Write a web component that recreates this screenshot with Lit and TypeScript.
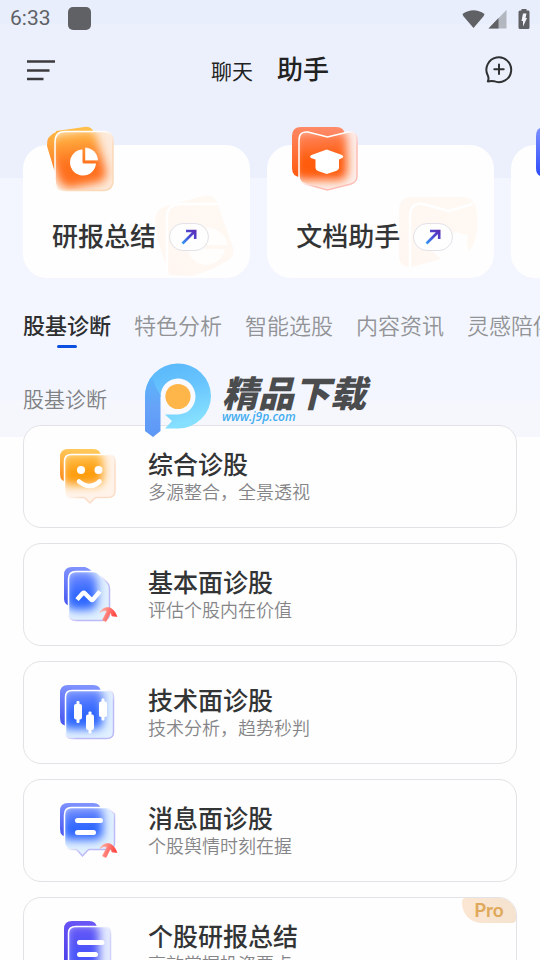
import { LitElement, html, svg, css } from "lit";
import { customElement, property, state } from "lit/decorators.js";
import { classMap } from "lit/directives/class-map.js";

type Art =
  | "pie" | "cap" | "blue"
  | "smile" | "trend" | "candles" | "message" | "report";

interface Tool { title: string; art: Art; }
interface Diagnosis { title: string; note: string; art: Art; pro?: boolean; }

const TOOLS: Tool[] = [
  { title: "研报总结", art: "pie" },
  { title: "文档助手", art: "cap" },
  { title: "智能写作", art: "blue" },
];

const TABS = ["股基诊断", "特色分析", "智能选股", "内容资讯", "灵感陪伴"];

const ITEMS: Diagnosis[] = [
  { title: "综合诊股", note: "多源整合，全景透视", art: "smile" },
  { title: "基本面诊股", note: "评估个股内在价值", art: "trend" },
  { title: "技术面诊股", note: "技术分析，趋势秒判", art: "candles" },
  { title: "消息面诊股", note: "个股舆情时刻在握", art: "message" },
  { title: "个股研报总结", note: "高效掌握投资要点", art: "report", pro: true },
];

/** Colours of a frosted icon: back plate, glow, glass and rim. */
interface Tint { a: string; b: string; glow: string; glass: string; rim: string; }

const AMBER: Tint = { a: "#ffc04a", b: "#ff6a1c", glow: "#ff6f1c", glass: "#fdeadb", rim: "#fbd9b8" };
const CORAL: Tint = { a: "#ff8a68", b: "#ff5a10", glow: "#ff5c08", glass: "#fdeeea", rim: "#ffbdb5" };
const HONEY: Tint = { a: "#ffc95a", b: "#ff8a1c", glow: "#ff9c0c", glass: "#fff3e9", rim: "#fbdcc6" };
const AZURE: Tint = { a: "#8093ff", b: "#4656f0", glow: "#2d66ff", glass: "#e2f1ff", rim: "#bcb9f7" };
const INDIGO: Tint = { a: "#6a55f5", b: "#4a3ee8", glow: "#4a55fa", glass: "#e4ebff", rim: "#d0d2fa" };

@customElement("glass-icon")
class GlassIcon extends LitElement {
  static styles = css`
    :host { display: block; }
    svg { display: block; width: 100%; height: 100%; overflow: visible; }
  `;

  @property() art: Art = "pie";

  private frosted(t: Tint, back: unknown, front: string, mark: unknown) {
    return svg`
      <defs>
        <linearGradient id="plate" x1="0.4" y1="0" x2="0.3" y2="1">
          <stop offset="0" stop-color=${t.a}></stop>
          <stop offset="1" stop-color=${t.b}></stop>
        </linearGradient>
        <linearGradient id="shine" x1="0.3" y1="0" x2="0.4" y2="1">
          <stop offset="0" stop-color=${t.a}></stop>
          <stop offset="0.6" stop-color=${t.glow}></stop>
        </linearGradient>
        <linearGradient id="rim" x1="0" y1="0" x2="1" y2="1">
          <stop offset="0" stop-color="#fff"></stop>
          <stop offset="0.42" stop-color="#fff"></stop>
          <stop offset="0.62" stop-color=${t.rim}></stop>
        </linearGradient>
        <filter id="soft" x="-40%" y="-40%" width="180%" height="180%">
          <feGaussianBlur stdDeviation="5"></feGaussianBlur>
        </filter>
        <clipPath id="pane"><path d=${front}></path></clipPath>
      </defs>
      <g fill="url(#plate)">${back}</g>
      <path d=${front} fill=${t.glass}></path>
      <g clip-path="url(#pane)">
        <g fill="url(#shine)" filter="url(#soft)" transform="translate(2 3)">${back}</g>
      </g>
      <path d=${front} fill="none" stroke="url(#rim)" stroke-width="1.5"></path>
      ${mark}`;
  }

  private redArrow() {
    return svg`
      <defs><linearGradient id="red" x1="0" y1="0" x2="1" y2="0.3">
        <stop offset="0" stop-color="#ffb9ad"></stop>
        <stop offset="1" stop-color="#ff4340"></stop>
      </linearGradient></defs>
      <path d="M41 47.500C43 43 49 41 53 44Q56 46 58 51.500L53 51L51.500 47.500L47 56.500L43.500 55L48 46C45 45 43 46 41 47.500Z"
        fill="url(#red)" stroke="url(#red)" stroke-width="0.600"></path>`;
  }

  private drawing() {
    switch (this.art) {
      case "pie":
        return this.frosted(AMBER,
          svg`<path d="M10 5 Q25 3 38 1 Q45 0 48 6 L58 42 Q59 50 52 53 L22 59 Q13 58 10 50 L1 20 Q0 10 10 6Z"></path>`,
          "M19 5.500H57Q67 5.500 67 16V54Q67 64.500 57 64.500H19Q9 64.500 9 54V16Q9 5.500 19 5.500Z",
          svg`<path d="M36.500 23.500A13 13 0 1 0 50 37.500H38Q36.500 37.500 36.500 36Z" fill="#fff"></path>
            <path d="M39 21.500A13 13 0 0 1 52 34.500H39Z" fill="#ffe6d2"></path>
            <path d="M40 22.500A12 12 0 0 1 51.500 34H40Z" fill="#fff"></path>`);
      case "cap":
        return this.frosted(CORAL,
          svg`<path d="M11 1H46Q55 1 55 10V42Q55 51 46 51H11Q2 51 2 42V10Q2 1 11 1Z"></path>`,
          "M9 14Q9 5 18 6L37.500 11L58 6Q67 5 67 14V50Q67 56 61 58L37.500 64L15 58Q9 56 9 50Z",
          svg`<path d="M36.700 23.500L52 29Q54.500 31 52 32L49 33.500V42Q49 44 46 45L36.700 48L28 45Q25.500 44 25.500 42V33.500L21 32Q19 30.500 21.500 29Z" fill="#fff"></path>`);
      case "blue":
        return this.frosted({ ...AZURE, b: "#2f4dfb" },
          svg`<path d="M11 1H46Q55 1 55 10V42Q55 51 46 51H11Q2 51 2 42V10Q2 1 11 1Z"></path>`,
          "M19 5.500H57Q67 5.500 67 16V54Q67 64.500 57 64.500H19Q9 64.500 9 54V16Q9 5.500 19 5.500Z", "");
      case "smile":
        return this.frosted(HONEY,
          svg`<path d="M9 2H34Q42 2 42 10V27Q42 35 34 35H9Q1 35 1 27V10Q1 2 9 2Z"></path>`,
          "M12.500 7.500H49Q56 7.500 56 14V44Q56 50.500 49 50.500H38Q36 50.500 35 52L31 56L27 52Q26 50.500 24 50.500H12.500Q5.500 50.500 5.500 44V14Q5.500 7.500 12.500 7.500Z",
          svg`<circle cx="22" cy="23" r="4" fill="#fff"></circle><circle cx="39.500" cy="23" r="4" fill="#fff"></circle>
            <path d="M20 34.500Q31 43.500 40.500 34.500" fill="none" stroke="#fff" stroke-width="4.500" stroke-linecap="round"></path>`);
      case "trend":
        return this.frosted(AZURE,
          svg`<path d="M13 2H26Q32 4 36 10V34Q35 42 28 42H13Q5 40 5 34V10Q5 2 13 2Z"></path>`,
          "M17 6.500H34Q38 6.500 40 9L48.500 18Q50.500 20 50.500 24V48Q50.500 55.500 43 55.500H17Q9.500 55.500 9.500 48V14Q9.500 6.500 17 6.500Z",
          svg`<path d="M19.500 33L23.500 28.500Q24.500 27 26 28.500L32 34.500Q33 35.500 34 34.500L39.500 28" fill="none" stroke="#fff" stroke-width="4.400" stroke-linecap="square"></path>${this.redArrow()}`);
      case "candles":
        return this.frosted(AZURE,
          svg`<path d="M9 2H34Q42 2 42 10V35Q42 43 34 43H9Q1 43 1 35V10Q1 2 9 2Z"></path>`,
          "M13 7.500H48Q54.500 7.500 54.500 14V49Q54.500 55.500 48 55.500H13Q6.500 55.500 6.500 49V14Q6.500 7.500 13 7.500Z",
          svg`<g fill="#fff">
            <rect x="15" y="21" width="8" height="15.500" rx="2"></rect><rect x="17.500" y="18" width="3" height="22" rx="1"></rect>
            <rect x="27" y="31.500" width="8" height="15.500" rx="2"></rect><rect x="29.500" y="28.500" width="3" height="22" rx="1"></rect>
            <rect x="40" y="18.500" width="8" height="15.500" rx="2"></rect><rect x="42.500" y="15.500" width="3" height="22" rx="1"></rect></g>`);
      case "message":
        return this.frosted(AZURE,
          svg`<path d="M9 2H34Q42 2 42 10V28Q42 36 34 36H9Q1 36 1 28V10Q1 2 9 2Z"></path>`,
          "M12.500 6.500H48L55.500 13V42Q55.500 48.500 49 48.500H30L28 50L23.500 55L19 50L17 48.500H12.500Q5.500 47 5.500 42V14Q5.500 6.500 12.500 6.500Z",
          svg`<path d="M18.500 19.500H41.500M18.500 31.500H34.500" stroke="#fff" stroke-width="5" stroke-linecap="round"></path>${this.redArrow()}`);
      case "report":
        return this.frosted(INDIGO,
          svg`<path d="M13 2H30Q38 2 38 10V40Q38 48 30 48H13Q5 48 5 40V10Q5 2 13 2Z"></path>`,
          "M17 7.500H45Q51.500 7.500 51.500 14V50Q51.500 57 45 57H17Q9.500 57 9.500 50V14Q9.500 7.500 17 7.500Z",
          svg`<path d="M20.500 23.500H43M20.500 35.500H36.500M20.500 47H36" stroke="#fff" stroke-width="5" stroke-linecap="round"></path>`);
    }
  }

  render() {
    const large = ["pie", "cap", "blue"].includes(this.art);
    return html`<svg viewBox=${large ? "0 0 68 66" : "0 0 60 58"} aria-hidden="true">${this.drawing()}</svg>`;
  }
}

@customElement("tool-card")
class ToolCard extends LitElement {
  static styles = css`
    :host { display: block; flex: 0 0 46%; }
    button {
      position: relative; display: flex; align-items: center; gap: 13px;
      width: 100%; padding: 74px 0 23px 29px;
      border: 0; border-radius: 24px; background: #fefefe;
      font: inherit; text-align: left; cursor: pointer;
    }
    .icon { position: absolute; left: 23px; top: -19px; width: 68px; height: 66px; }
    .ghost { position: absolute; right: 15px; top: 50px; width: 80px; height: 83px; }
    .title {
      position: relative; padding-bottom: 4px; font-size: 26px; line-height: 32px; font-weight: 500;
      color: #333435; white-space: nowrap;
    }
    .go {
      position: relative; box-sizing: border-box; width: 40px; height: 28px;
      display: grid; place-items: center; flex: none;
      border: 1px solid #e2e2e8; border-radius: 14px; background: #fefefe;
    }
    .go svg { display: block; width: 18px; height: 18px; }
  `;

  @property() label = "";
  @property() art: Art = "pie";

  private ghost() {
    if (this.art === "pie") {
      return svg`
        <path d="M12 11Q30 6 48 1Q58 -1 62 7L78 52Q80 62 72 66Q56 76 36 81L14 80Q10 66 3 46L0 26Q0 14 12 11Z" fill="url(#wash)"></path>
        <path d="M12 80V22Q12 9 26 9H66" fill="none" stroke="#fff" stroke-width="2.500"></path>
        <path d="M52 33V50H73Q70 35 52 32ZM49 36Q34 42 33 55Q36 69 51 70Q66 69 70 54H49Z" fill="#fff" opacity="0.8"></path>`;
    }
    return svg`
      <path d="M12 2H64Q77 2 78 20Q80 44 70 56L68 48L69 40L56 37L49 42L33 56L42 64L12 72Q0 72 0 60V16Q0 2 12 2Z" fill="url(#wash)"></path>
      <path d="M11 72V20Q12 7 24 9L50 16L74 9" fill="none" stroke="#fff" stroke-width="2.500"></path>`;
  }

  render() {
    return html`<button type="button">
      <glass-icon class="icon" art=${this.art}></glass-icon>
      <svg class="ghost" viewBox="0 0 80 83" aria-hidden="true">
        <defs><linearGradient id="wash" x1="1" y1="0" x2="0" y2="1">
          <stop offset="0" stop-color="#fff9f3"></stop><stop offset="1" stop-color="#fff6f1"></stop>
        </linearGradient></defs>
        ${this.ghost()}
      </svg>
      <span class="title">${this.label}</span>
      <span class="go">
        <svg viewBox="0 0 18 18" aria-hidden="true">
          <defs><linearGradient id="ink" x1="0" y1="1" x2="1" y2="0">
            <stop offset="0" stop-color="#2f9bf5"></stop><stop offset="0.500" stop-color="#4a50d6"></stop><stop offset="1" stop-color="#5a2fb8"></stop>
          </linearGradient></defs>
          <path d="M2.500 15.500L15 3M6 3H15.200V11" fill="none" stroke="url(#ink)" stroke-width="2.600"></path>
        </svg>
      </span>
    </button>`;
  }
}

@customElement("diagnosis-row")
class DiagnosisRow extends LitElement {
  static styles = css`
    :host { display: block; }
    button {
      position: relative; box-sizing: border-box; width: 100%;
      display: flex; align-items: center; gap: 29px;
      padding: 21px 35px 22px; border: 1px solid #e3e3e7; border-radius: 18px;
      background: #fefefe; font: inherit; text-align: left; cursor: pointer;
    }
    glass-icon { flex: none; width: 60px; height: 58px; }
    .text { display: flex; flex-direction: column; padding-bottom: 2px; }
    .title { font-size: 25px; line-height: 32px; font-weight: 500; color: #333435; }
    .note { font-size: 18px; line-height: 24px; font-weight: 350; color: #858588; }
    .pro {
      position: absolute; right: 0; top: 0; box-sizing: border-box; width: 54px; height: 25px;
      border-radius: 4px 17px 4px 20px;
      background: linear-gradient(90deg, #fbe6d2, #f5e3cf);
      color: #dfa95c; font: 700 19px/24px Lato, sans-serif; text-align: center;
    }
  `;

  @property({ attribute: false }) item!: Diagnosis;

  render() {
    const { title, note, art, pro } = this.item;
    return html`<button type="button">
      <glass-icon art=${art}></glass-icon>
      <span class="text"><span class="title">${title}</span><span class="note">${note}</span></span>
      ${pro ? html`<span class="pro">Pro</span>` : ""}
    </button>`;
  }
}

@customElement("app-root")
class AppRoot extends LitElement {
  static styles = css`
    :host {
      display: flex; flex-direction: column; height: 100vh; overflow: hidden;
      font-family: "Noto Sans CJK SC", "Noto Sans", sans-serif; color: #222;
      background: linear-gradient(#e8eefc 24px, #ecf0fd 24px 178px, #f3f6fe 178px 401px, #f6f7fc 401px 437px, #fefefe 437px);
    }
    button { border: 0; padding: 0; background: none; font: inherit; color: inherit; cursor: pointer; }
    svg { display: block; }

    .status { display: flex; align-items: center; flex: none; height: 37px; padding: 0 10px; color: #606165; }
    .clock { font: 400 21px/37px Roboto, sans-serif; }
    .notice { width: 23px; height: 23px; margin-left: 17px; border-radius: 5px; background: #606165; }
    .signals { margin-left: auto; width: 68px; height: 20px; }

    .bar { display: grid; grid-template-columns: 1fr auto 1fr; align-items: center; flex: none; height: 64px; padding: 0 25px; }
    .bar .round { width: 32px; height: 32px; }
    .bar .end { justify-self: end; }
    .modes { display: flex; align-items: baseline; gap: 24px; font-size: 21px; line-height: 36px; }
    .modes .on { font-size: 26px; font-weight: 500; }

    .tools { display: flex; gap: 17px; flex: none; padding: 44px 23px 0; overflow: hidden; }

    .tabs { display: flex; gap: 23px; flex: none; padding: 29px 23px 0; overflow: hidden; }
    .tab { flex: none; display: flex; flex-direction: column; align-items: center; gap: 4px; font-size: 22px; line-height: 34px; font-weight: 350; color: #929396; }
    .tab::after { content: ""; width: 20px; height: 3px; border-radius: 2px; }
    .tab.on { color: #2e2f31; font-weight: 500; }
    .tab.on::after { background: #0b50e0; }

    .group { position: relative; z-index: 1; flex: none; padding: 35px 23px 12px; }
    h2 { margin: 0; font-size: 21px; line-height: 30px; font-weight: 350; color: #808184; }
    .brand { position: absolute; left: 144px; top: 15px; display: flex; gap: 10px; pointer-events: none; }
    .brand .logo { width: 68px; height: 75px; }
    .words { display: flex; flex-direction: column; padding-top: 10px; }
    .name { font-size: 36px; line-height: 36px; font-weight: 900; font-style: italic; color: #4b4c4e; }
    .site { font: italic 600 12px/16px "Open Sans", sans-serif; color: #43adf0; }

    ul { display: flex; flex-direction: column; gap: 15px; flex: none; margin: 0; padding: 0 23px 20px; list-style: none; }
  `;

  @state() private tab = 0;

  render() {
    return html`
      <div class="status">
        <span class="clock">6:33</span><span class="notice"></span>
        <svg class="signals" viewBox="0 0 68 20" aria-hidden="true" fill="#606165">
          <path d="M0.500 5Q11.500 -2.500 22.500 5Q22 7 20.500 8.500L11.500 19L2.500 8.500Q1 7 0.500 5Z"></path>
          <path d="M44.500 1V19.500H26.500Z" opacity="0.4"></path><path d="M36.500 9V19.500H26.500Z"></path>
          <path d="M59.500 0H64.500V1.500H66.500Q67.500 1.500 67.500 3V18.500Q67.500 20 66 20H58Q56.500 20 56.500 18.500V3Q56.500 1.500 58 1.500H59.500Z"></path>
          <path d="M61 4.500H64.500L63.500 9H65L61 17.500V12H59.500Z" fill="#f3f5fd"></path>
        </svg>
      </div>

      <header class="bar">
        <button class="round" type="button" aria-label="菜单">
          <svg viewBox="0 0 32 32" width="32" height="32"><path d="M2 8.500H30M2 17.500H24.500M2 26H18.500" stroke="#3b3a3d" stroke-width="2.600"></path></svg>
        </button>
        <nav class="modes">
          <button type="button">聊天</button><button class="on" type="button">助手</button>
        </nav>
        <button class="round end" type="button" aria-label="新对话">
          <svg viewBox="0 0 32 32" width="32" height="32" fill="none" stroke="#303133" stroke-width="2" stroke-linecap="round" stroke-linejoin="round">
            <path d="M4.800 22.500A12.400 12.400 0 1 1 11 28.200Q8 27.800 4.800 28.400Q6.200 25.500 4.800 22.500Z"></path>
            <path d="M16 11.500V21M11.300 16.300H20.700"></path>
          </svg>
        </button>
      </header>

      <section class="tools">
        ${TOOLS.map((t) => html`<tool-card label=${t.title} art=${t.art}></tool-card>`)}
      </section>

      <nav class="tabs">
        ${TABS.map((t, i) => html`<button type="button" class=${classMap({ tab: true, on: i === this.tab })}
          @click=${() => { this.tab = i; }}>${t}</button>`)}
      </nav>

      <div class="group">
        <h2>${TABS[this.tab]}</h2>
        <div class="brand">
          <svg class="logo" viewBox="0 0 68 75" aria-hidden="true">
            <defs>
              <linearGradient id="sweep" x1="0" y1="0" x2="0.300" y2="1">
                <stop offset="0" stop-color="#58b6fb"></stop><stop offset="0.500" stop-color="#68c4fd"></stop><stop offset="1" stop-color="#85dfff"></stop>
              </linearGradient>
              <linearGradient id="stem" x1="0" y1="0" x2="0" y2="1">
                <stop offset="0" stop-color="#5ab4fb"></stop><stop offset="0.500" stop-color="#66a3f8"></stop><stop offset="1" stop-color="#5c97f6"></stop>
              </linearGradient>
            </defs>
            <circle cx="34" cy="33" r="19" fill="#f8faff"></circle>
            <path d="M1 34A33 32.500 0 1 1 34 65.500H21L28 58L21 51.500H34A17.500 18 0 1 0 16.500 34Z" fill="url(#sweep)"></path>
            <path d="M1 34Q1 22 8 14Q11 24 16.500 32V68L9 74L1 68Z" fill="url(#stem)"></path>
            <circle cx="34" cy="33.500" r="12.600" fill="#feb64a"></circle>
          </svg>
          <div class="words"><span class="name">精品下载</span><span class="site">www.j9p.com</span></div>
        </div>
      </div>

      <ul>
        ${ITEMS.map((item) => html`<li><diagnosis-row .item=${item}></diagnosis-row></li>`)}
      </ul>
    `;
  }
}
